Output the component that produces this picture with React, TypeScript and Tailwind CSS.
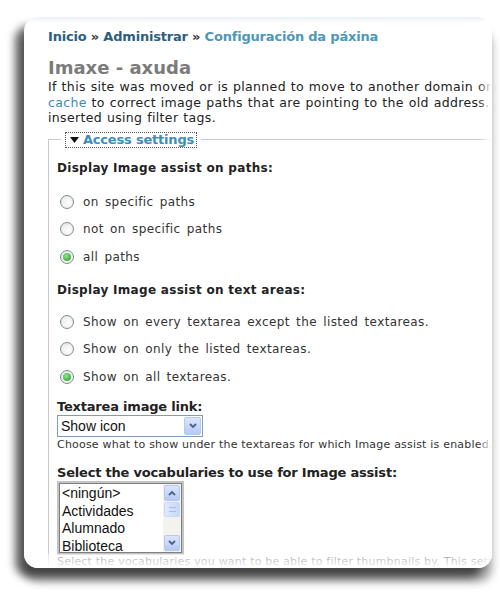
import React from "react";

const verdana = "font-['DejaVu_Sans',Verdana,sans-serif]";
const arial = "font-['Liberation_Sans',Arial,sans-serif]";

function Radio({ checked, label }: { checked?: boolean; label: string }) {
  return (
    <div className="flex h-[27.5px] items-center">
      <span className="ml-[3px] flex h-[14px] w-[14px] items-center justify-center rounded-full border border-[#7d8b98] bg-[radial-gradient(circle_at_60%_60%,#ffffff,#e2e2dc)]">
        {checked && <span className="h-[8px] w-[8px] rounded-full bg-[radial-gradient(circle_at_40%_35%,#8ee68e,#1f9d1f)]" />}
      </span>
      <span className="ml-[9px] text-[12px] tracking-[0.4px] text-[#333] [word-spacing:2px]">{label}</span>
    </div>
  );
}

export default function App() {
  return (
    <div className={`relative h-[592px] w-[500px] overflow-hidden bg-white ${verdana}`}>
      <div className="ml-[24px] mt-[17px] h-[551px] w-[468px] rounded-[14px] bg-white shadow-[-9px_9px_8px_rgba(0,0,0,0.6),0_14px_9px_rgba(0,0,0,0.35)]">
        <div className="relative h-full w-full overflow-hidden rounded-[14px]">
          <div className="pl-[24px] pt-[11px]">
            <div className="whitespace-nowrap text-[13px] font-bold leading-[18px] tracking-[-0.2px] text-[#333]">
              <span className="text-[#2c607f]">Inicio</span> » <span className="text-[#2c607f]">Administrar</span> »{" "}
              <span className="text-[#4d98b9]">Configuración da páxina</span>
            </div>
            <h2 className="mt-[11px] text-[18px] font-bold leading-[22px] text-[#7b7b7b]">Imaxe - axuda</h2>
            <p className="whitespace-nowrap text-[12.5px] leading-[15.5px] tracking-[0.35px] text-[#222] [word-spacing:0.5px]">
              If this site was moved or is planned to move to another domain or sub-directory, you might need to flush the
              <br />
              <span className="text-[#3b8ab4]">cache</span> to correct image paths that are pointing to the old address. This only applies to images
              <br />
              inserted using filter tags.
            </p>

            <fieldset className="mt-[6px] w-[480px] border border-[#c9c9c9] pb-[20px] pl-[8px]">
              <legend className="ml-[4px] px-[4px]">
                <span className="flex h-[16px] items-center gap-[4px] border border-dotted border-[#555] pl-[4px] pr-[2px] text-[13px] font-bold tracking-[-0.2px] text-[#3d8db9]">
                  <svg width="9" height="6" viewBox="0 0 9 6"><path d="M0 0h9L4.5 6z" fill="#111" /></svg>
                  Access settings
                </span>
              </legend>

              <div className="mt-[11.5px] text-[12px] font-bold leading-[18px] tracking-[0.3px] text-[#222]">Display Image assist on paths:</div>
              <div className="mt-[11px]">
                <Radio label="on specific paths" />
                <Radio label="not on specific paths" />
                <Radio checked label="all paths" />
              </div>

              <div className="mt-[10px] text-[12px] font-bold leading-[18px] tracking-[0.3px] text-[#222]">Display Image assist on text areas:</div>
              <div className="mt-[9.5px]">
                <Radio label="Show on every textarea except the listed textareas." />
                <Radio label="Show on only the listed textareas." />
                <Radio checked label="Show on all textareas." />
              </div>

              <div className="mt-[8.5px] text-[13px] font-bold leading-[16px] tracking-[-0.2px] text-[#222]">Textarea image link:</div>
              <div className="flex h-[22px] w-[146px] items-center border border-[#7f9db9] bg-white">
                <span className={`flex-1 pl-[3px] text-[14px] text-[#111] ${arial}`}>Show icon</span>
                <span className="mr-[1px] flex h-[18px] w-[17px] items-center justify-center rounded-[2px] border border-[#b5c8f2] bg-[linear-gradient(#dbe6fd,#b5c9f7)]">
                  <svg width="8" height="6" viewBox="0 0 8 6"><path d="M1 1l3 3 3-3" stroke="#4d6185" strokeWidth="1.8" fill="none" /></svg>
                </span>
              </div>
              <div className="mt-[1px] whitespace-nowrap text-[11px] leading-[14px] tracking-[0.2px] text-[#333]">
                Choose what to show under the textareas for which Image assist is enabled.
              </div>

              <div className="mt-[13px] whitespace-nowrap text-[13px] font-bold leading-[16px] tracking-[-0.2px] text-[#222]">Select the vocabularies to use for Image assist:</div>
              <div className="flex h-[74px] w-[127px] border-2 border-[#c4c4c4] bg-white">
                <div className={`flex-1 border border-r-0 border-[#7f7f7f] pl-[2px] pt-[1px] text-[14px] leading-[17.7px] text-[#111] ${arial}`}>
                  <div>&lt;ningún&gt;</div>
                  <div>Actividades</div>
                  <div>Alumnado</div>
                  <div>Biblioteca</div>
                </div>
                <div className="flex w-[19px] flex-col border border-l-0 border-[#7f7f7f] bg-[#f4f2ec] p-[1px]">
                  <span className="flex h-[16px] items-center justify-center rounded-[2px] border border-[#b5c8f2] bg-[linear-gradient(#dbe6fd,#b5c9f7)]">
                    <svg width="8" height="6" viewBox="0 0 8 6"><path d="M1 5l3-3 3 3" stroke="#4d6185" strokeWidth="1.8" fill="none" /></svg>
                  </span>
                  <span className="mt-[1px] flex h-[15px] items-center justify-center rounded-[2px] border border-[#c9d8fa] bg-[linear-gradient(90deg,#dfe8fd,#c8d7fa)]">
                    <span className="h-[5px] w-[7px] border-y border-[#aabbe6]" />
                  </span>
                  <span className="flex-1" />
                  <span className="flex h-[16px] items-center justify-center rounded-[2px] border border-[#b5c8f2] bg-[linear-gradient(#dbe6fd,#b5c9f7)]">
                    <svg width="8" height="6" viewBox="0 0 8 6"><path d="M1 1l3 3 3-3" stroke="#4d6185" strokeWidth="1.8" fill="none" /></svg>
                  </span>
                </div>
              </div>
              <div className="whitespace-nowrap text-[11px] leading-[14px] tracking-[0.2px] text-[#333]">
                Select the vocabularies you want to be able to filter thumbnails by. This setting changes the display.
              </div>
            </fieldset>
          </div>

          <div className="absolute inset-x-0 top-0 h-[6px] bg-[linear-gradient(rgba(200,215,230,0.35),rgba(255,255,255,0))]" />
          <div className="absolute inset-y-0 right-0 w-[14px] bg-[linear-gradient(90deg,rgba(255,255,255,0),#ffffff)]" />
          <div className="absolute inset-x-0 bottom-0 h-[14px] bg-[linear-gradient(rgba(255,255,255,0.55),rgba(255,255,255,0.95))]" />
        </div>
      </div>
    </div>
  );
}
